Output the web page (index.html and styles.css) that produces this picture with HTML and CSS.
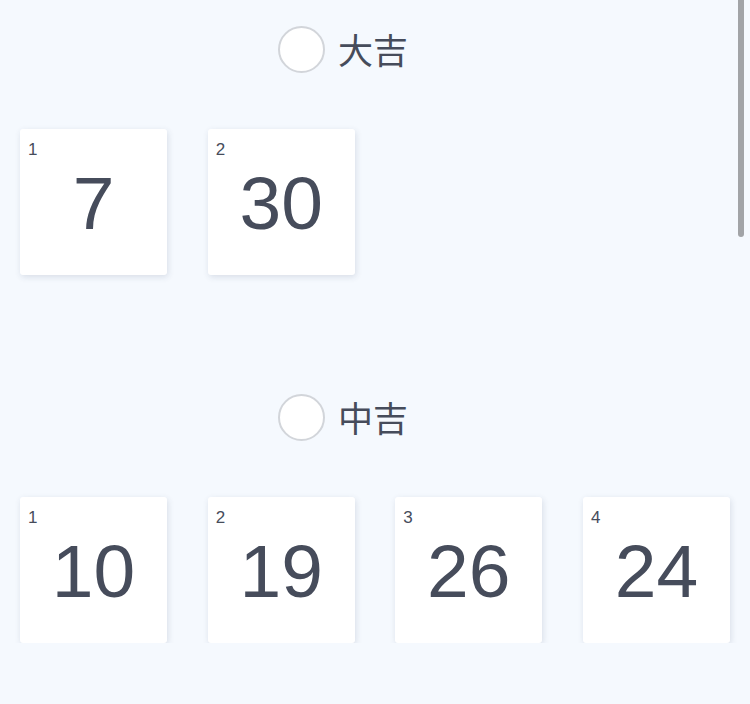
FILE: index.html
```html
<!DOCTYPE html>
<html lang="zh">
<head>
<meta charset="utf-8">
<link rel="stylesheet" href="styles.css">
</head>
<body>
<main class="page">
  <section class="group">
    <div class="group-head">
      <span class="radio"></span>
      <span class="group-title">大吉</span>
    </div>
    <div class="cards">
      <div class="card"><span class="card-index">1</span><span class="card-num">7</span></div>
      <div class="card"><span class="card-index">2</span><span class="card-num">30</span></div>
    </div>
  </section>
  <section class="group">
    <div class="group-head">
      <span class="radio"></span>
      <span class="group-title">中吉</span>
    </div>
    <div class="cards">
      <div class="card"><span class="card-index">1</span><span class="card-num">10</span></div>
      <div class="card"><span class="card-index">2</span><span class="card-num">19</span></div>
      <div class="card"><span class="card-index">3</span><span class="card-num">26</span></div>
      <div class="card"><span class="card-index">4</span><span class="card-num">24</span></div>
    </div>
  </section>
</main>
<div class="scroll-thumb"></div>
</body>
</html>
```

FILE: styles.css
```css
html, body {
  margin: 0;
  padding: 0;
  background: #f5f9fe;
  font-family: "Liberation Sans", "Noto Sans CJK SC", sans-serif;
  color: #464c5b;
}

.page {
  display: flex;
  flex-direction: column;
  gap: 119px;
  padding: 26px 20px 0;
}

.group {
  display: flex;
  flex-direction: column;
  gap: 57px;
}

.group-head {
  display: flex;
  align-items: center;
  justify-content: center;
  gap: 13px;
  height: 46px;
  padding-right: 64px;
}

.radio {
  width: 43px;
  height: 43px;
  border: 2px solid #d2d5da;
  border-radius: 50%;
  background: #ffffff;
  flex: none;
}

.group-title {
  font-family: "Noto Sans CJK SC", sans-serif;
  font-size: 35px;
  line-height: 46px;
  color: #464c5b;
}

.cards {
  display: grid;
  grid-template-columns: repeat(4, 147px);
  justify-content: space-between;
}

.card {
  position: relative;
  height: 146px;
  background: #ffffff;
  border-radius: 3px;
  box-shadow: 1px 2px 6px rgba(40, 60, 90, 0.14);
  display: flex;
  align-items: center;
  justify-content: center;
}

.card-index {
  position: absolute;
  top: 11px;
  left: 8px;
  font-size: 17px;
  line-height: 19px;
}

.card-num {
  font-size: 75px;
  line-height: 1;
  padding-top: 3px;
}

.scroll-thumb {
  position: fixed;
  top: 0;
  right: 6px;
  width: 6px;
  height: 237px;
  border-radius: 0 0 3px 3px;
  background: #a2a4a7;
}
```
